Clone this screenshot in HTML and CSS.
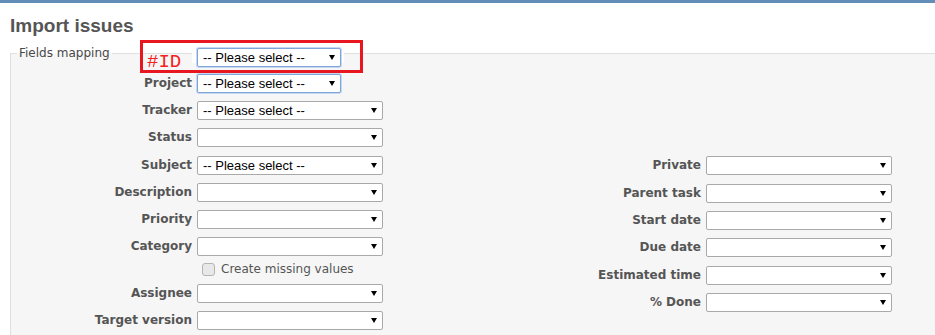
FILE: index.html
```html
<html>
<head>
<link rel="stylesheet" href="styles.css">
<title>Import issues</title>
</head>
<body>
<div class="topbar"></div>
<div class="content">
	<h2>Import issues</h2>

	<div class="annot">
		<span class="tag">#ID</span>
		<span class="snip">
			<span class="sel narrow focus"><select><option>-- Please select --</option></select></span>
		</span>
	</div>

	<div class="box">
		<span class="legend">Fields mapping</span>

		<div class="row">
			<label>Project</label>
			<span class="sel narrow focus"><select><option>-- Please select --</option></select></span>
		</div>
		<div class="row">
			<label>Tracker</label>
			<span class="sel"><select><option>-- Please select --</option></select></span>
		</div>
		<div class="row">
			<label>Status</label>
			<span class="sel"><select><option></option></select></span>
		</div>

		<div class="split">
			<div class="col">
				<div class="row">
					<label>Subject</label>
					<span class="sel"><select><option>-- Please select --</option></select></span>
				</div>
				<div class="row">
					<label>Description</label>
					<span class="sel"><select><option></option></select></span>
				</div>
				<div class="row">
					<label>Priority</label>
					<span class="sel"><select><option></option></select></span>
				</div>
				<div class="row">
					<label>Category</label>
					<span class="sel"><select><option></option></select></span>
				</div>
				<div class="check">
					<input type="checkbox"> Create missing values
				</div>
				<div class="row">
					<label>Assignee</label>
					<span class="sel"><select><option></option></select></span>
				</div>
				<div class="row">
					<label>Target version</label>
					<span class="sel"><select><option></option></select></span>
				</div>
				<div class="check">
					<input type="checkbox"> Create missing values
				</div>
			</div>
			<div class="col right">
				<div class="row">
					<label>Private</label>
					<span class="sel"><select><option></option></select></span>
				</div>
				<div class="row">
					<label>Parent task</label>
					<span class="sel"><select><option></option></select></span>
				</div>
				<div class="row">
					<label>Start date</label>
					<span class="sel"><select><option></option></select></span>
				</div>
				<div class="row">
					<label>Due date</label>
					<span class="sel"><select><option></option></select></span>
				</div>
				<div class="row">
					<label>Estimated time</label>
					<span class="sel"><select><option></option></select></span>
				</div>
				<div class="row">
					<label>% Done</label>
					<span class="sel"><select><option></option></select></span>
				</div>
			</div>
		</div>
	</div>
</div>
</body>
</html>
```

FILE: styles.css
```css
html, body {
	margin: 0;
	overflow: hidden;
}

body {
	font-family: "DejaVu Sans", Verdana, sans-serif;
	font-size: 12px;
	color: #484848;
	background-color: #fff;
}

.topbar {
	height: 3px;
	background-color: #628db6;
}

.content {
	position: relative;
	padding: 0 10px;
}

h2 {
	font-family: "Liberation Sans", Arial, sans-serif;
	font-size: 19px;
	font-weight: bold;
	color: #555;
	margin: 0;
	padding-top: 11px;
	line-height: 24px;
}

.box {
	position: relative;
	width: 1030px;
	margin-top: 15px;
	padding: 16px 6px 0;
	border: 1px solid #e0e0e0;
	background-color: #f6f6f6;
}

.legend {
	position: absolute;
	left: 6px;
	top: -8px;
	padding: 0 2px;
	line-height: 14px;
	background: linear-gradient(#fff 50%, #f6f6f6 50%);
}

.row {
	display: flex;
	align-items: center;
	height: 27px;
}

.row label {
	width: 175px;
	margin-right: 5px;
	padding-bottom: 1px;
	text-align: right;
	font-weight: bold;
	color: #555;
}

.split {
	display: flex;
	margin-top: 1px;
}

.col {
	width: 509px;
}

.col.right .row {
	height: 27.4px;
}

.sel {
	position: relative;
	display: inline-block;
	width: 186px;
	height: 19px;
}

.sel.narrow {
	width: 144px;
}

.sel select {
	appearance: none;
	-webkit-appearance: none;
	width: 100%;
	height: 100%;
	margin: 0;
	padding: 0 0 0 5px;
	border: 1px solid #a9a9a9;
	border-radius: 2px;
	background-color: #fff;
	color: #000;
	font: 13px "Liberation Sans", Arial, sans-serif;
}

.sel::after {
	content: "";
	position: absolute;
	right: 6px;
	top: 7px;
	border-left: 3px solid transparent;
	border-right: 3px solid transparent;
	border-top: 5px solid #000;
}

.sel.focus select {
	border-color: #7ea4d8;
	box-shadow: 0 0 0 1px #c6d8f2;
}

.check {
	display: flex;
	align-items: center;
	height: 20px;
	padding-left: 185px;
	padding-bottom: 2px;
	box-sizing: border-box;
	color: #555;
}

.check input {
	appearance: none;
	-webkit-appearance: none;
	width: 13px;
	height: 13px;
	margin: 0 6px 0 0;
	border: 1px solid #b5b5b5;
	border-radius: 3px;
	background-color: #e8e8e8;
}

/* pasted annotation over the first mapping row */
.annot {
	position: absolute;
	left: 140px;
	top: 37px;
	width: 217px;
	height: 27px;
	display: flex;
	border: 3px solid #e8161f;
	z-index: 2;
}

.annot .tag {
	width: 45px;
	padding: 10px 0 0 4px;
	font-family: "Liberation Mono", "Courier New", monospace;
	font-size: 19px;
	line-height: 18px;
	color: #f52020;
}

.annot .snip {
	padding: 5px 3px 0 5px;
	height: 15px;
	background-color: #fff;
}
```
